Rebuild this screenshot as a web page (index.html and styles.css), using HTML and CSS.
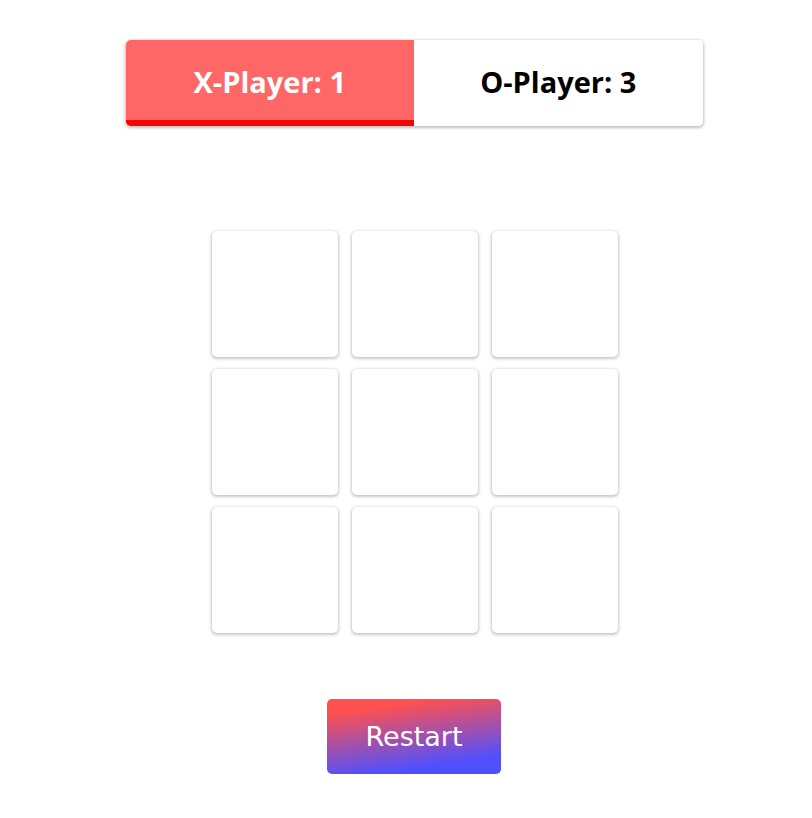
FILE: index.html
```html
<!DOCTYPE html>
<html lang="en">
<head>
<meta charset="utf-8">
<title>Tic Tac Toe</title>
<link rel="stylesheet" href="styles.css">
</head>
<body>
<main class="game">
  <div class="turn-container">
    <div class="turn turn-x active">X-Player: 1</div>
    <div class="turn turn-o">O-Player: 3</div>
  </div>
  <div class="board">
    <div class="cell"></div>
    <div class="cell"></div>
    <div class="cell"></div>
    <div class="cell"></div>
    <div class="cell"></div>
    <div class="cell"></div>
    <div class="cell"></div>
    <div class="cell"></div>
    <div class="cell"></div>
  </div>
  <button class="restart">Restart</button>
</main>
</body>
</html>
```

FILE: styles.css
```css
* { box-sizing: border-box; }
html, body { margin: 0; padding: 0; background: #fff; }
body { font-family: "Open Sans", "Noto Sans", sans-serif; }
.game {
  display: flex;
  flex-direction: column;
  align-items: center;
  padding-top: 40px;
}
.turn-container {
  display: flex;
  width: 577px;
  height: 86px;
  border-radius: 5px;
  overflow: hidden;
  box-shadow: 0 1px 3px 1px rgba(0,0,0,0.25);
  margin-left: 16px;
}
.turn {
  flex: 1;
  display: flex;
  align-items: center;
  justify-content: center;
  font-size: 29px;
  font-weight: 700;
  color: #000;
  background: #fff;
  padding-bottom: 4px;
}
.turn-x.active {
  background: #ff6666;
  color: #fff;
  border-bottom: 6px solid #ff0000;
  padding-bottom: 0;
  padding-top: 2px;
}
.board {
  display: grid;
  grid-template-columns: repeat(3, 126px);
  grid-template-rows: repeat(3, 126px);
  column-gap: 14px;
  row-gap: 12px;
  margin-top: 105px;
  margin-left: 18px;
}
.cell {
  border-radius: 5px;
  background: #fff;
  box-shadow: 0 1px 3px 1px rgba(0,0,0,0.22);
}
.restart {
  margin-top: 66px;
  margin-left: 16px;
  width: 174px;
  height: 75px;
  border: none;
  border-radius: 5px;
  color: #fff;
  font-family: "DejaVu Sans", sans-serif;
  font-size: 27px;
  background: linear-gradient(172deg, #ff5050 15%, #5050ff 82%);
  padding: 0;
}
```
